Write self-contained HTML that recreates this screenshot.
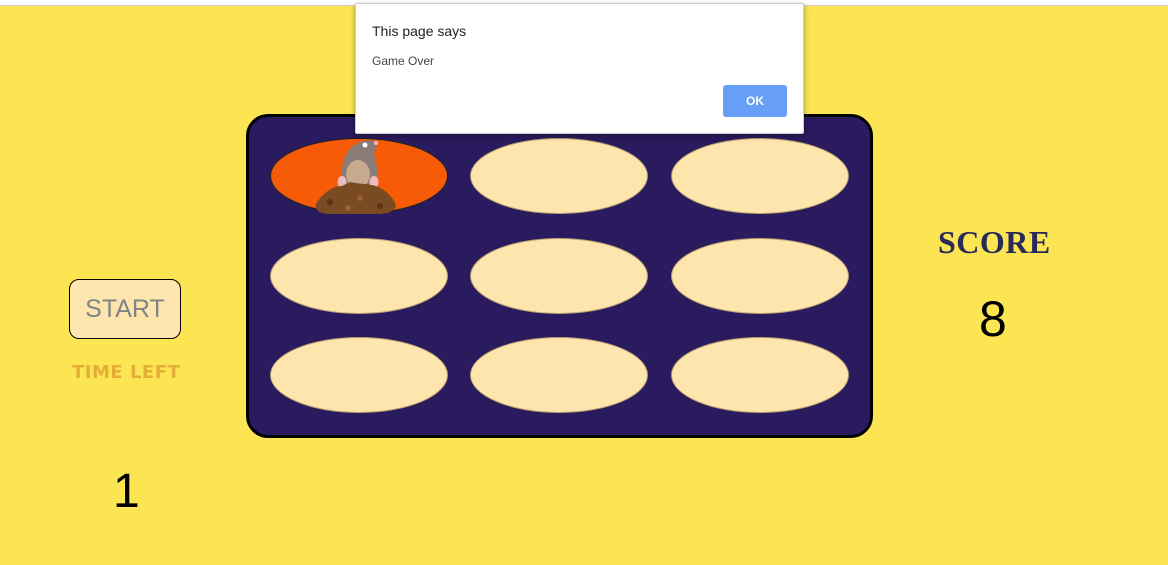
<!DOCTYPE html>
<html><head><style>
html,body{margin:0;padding:0}
body{width:1168px;height:565px;background:#fbe552;position:relative;overflow:hidden;font-family:"Liberation Sans",sans-serif}
.top{position:absolute;left:0;top:0;width:1168px;height:5px;background:#fff;border-bottom:1px solid #ccc}
.board{position:absolute;left:246px;top:114px;width:621px;height:318px;background:#2a1b5e;border:3px solid #000;border-radius:22px}
.h{position:absolute;width:178px;height:76px;border-radius:50%;background:#fee5ad;box-sizing:border-box;border:1px solid #b9a070}
.start{position:absolute;left:69px;top:279px;width:112px;height:60px;box-sizing:border-box;border:1px solid #000;border-radius:10px;background:#fee5ad;color:#7f8486;font-size:25px;text-align:center;line-height:58px}
.tl{position:absolute;left:72px;top:362px;color:#e3ad36;font-family:"DejaVu Sans",sans-serif;font-weight:bold;font-size:18px;letter-spacing:0.5px}
.one{position:absolute;left:113px;top:464px;font-size:48px;color:#000}
.sc{position:absolute;left:938px;top:224px;font-family:"Liberation Serif",serif;font-weight:bold;font-size:32px;color:#2a2a5a;letter-spacing:0.5px}
.eight{position:absolute;left:979px;top:290px;font-size:50px;color:#000}
.dlg{position:absolute;left:355px;top:3px;width:447px;height:129px;background:#fff;border:1px solid #ccc;box-shadow:0 2px 6px rgba(0,0,0,.35);border-radius:2px}
.t1{position:absolute;left:16px;top:19px;font-size:14px;color:#222}
.t2{position:absolute;left:16px;top:50px;font-size:12px;color:#444}
.ok{position:absolute;left:367px;top:81px;width:64px;height:32px;background:#679ef6;border-radius:3px;color:#fff;font-weight:bold;font-size:12px;text-align:center;line-height:32px}
</style></head><body>
<div class="top"></div>
<div class="board"></div>
<div class="h" style="left:270px;top:138px;background:#f65c07;border-color:#222"></div>
<svg style="position:absolute;left:310px;top:136px" width="100" height="80" viewBox="0 0 100 80">
<path d="M32 52 C30 32 34 14 46 8 C54 3 62 4 68 6 L64 18 C68 30 68 42 66 52 Z" fill="#8a7a78"/>
<ellipse cx="48" cy="38" rx="12" ry="14" fill="#c7a98e"/>
<circle cx="55" cy="9" r="2.5" fill="#fff"/>
<circle cx="66" cy="7" r="2" fill="#f1b9c2"/>
<ellipse cx="32" cy="46" rx="4.5" ry="6" fill="#f1b9c2"/>
<ellipse cx="64" cy="46" rx="4.5" ry="6" fill="#f1b9c2"/>
<path d="M6 68 C12 58 22 50 32 50 L40 46 C50 48 60 48 66 50 C76 54 84 62 86 70 C84 76 76 78 68 78 L20 78 C10 78 4 74 6 68 Z" fill="#7a4a22"/>
<circle cx="20" cy="66" r="3" fill="#5d3312"/><circle cx="50" cy="62" r="3" fill="#9a6232"/><circle cx="70" cy="70" r="3" fill="#5d3312"/><circle cx="38" cy="72" r="3" fill="#9a6232"/>
</svg>
<div class="h" style="left:470px;top:138px"></div>
<div class="h" style="left:671px;top:138px"></div>
<div class="h" style="left:270px;top:238px"></div>
<div class="h" style="left:470px;top:238px"></div>
<div class="h" style="left:671px;top:238px"></div>
<div class="h" style="left:270px;top:337px"></div>
<div class="h" style="left:470px;top:337px"></div>
<div class="h" style="left:671px;top:337px"></div>
<div class="start">START</div>
<div class="tl">TIME LEFT</div>
<div class="one">1</div>
<div class="sc">SCORE</div>
<div class="eight">8</div>
<div class="dlg"><div class="t1">This page says</div><div class="t2">Game Over</div><div class="ok">OK</div></div>
</body></html>
